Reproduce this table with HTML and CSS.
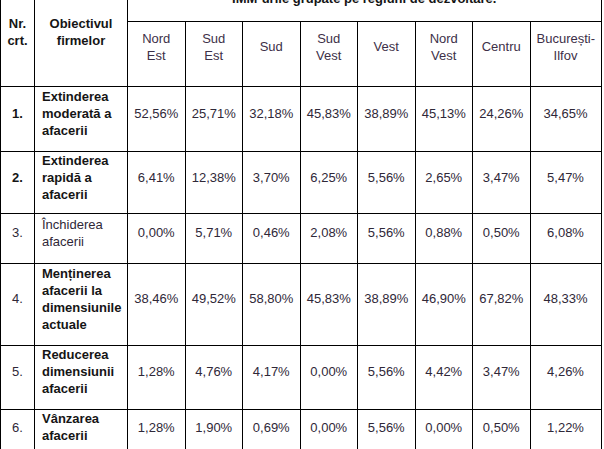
FILE: index.html
```html
<!DOCTYPE html>
<html lang="ro">
<head>
<meta charset="utf-8">
<title>Obiectivul firmelor</title>
<link rel="stylesheet" href="styles.css">
</head>
<body>
<table class="grid">
  <colgroup>
    <col class="c-nr">
    <col class="c-obj">
    <col class="c-reg">
    <col class="c-reg">
    <col class="c-reg">
    <col class="c-reg">
    <col class="c-reg">
    <col class="c-reg">
    <col class="c-reg">
    <col class="c-buc">
  </colgroup>
  <tr class="r-title">
    <th class="hd" rowspan="2">Nr.<br>crt.</th>
    <th class="hd" rowspan="2">Obiectivul<br>firmelor</th>
    <th class="hd title" colspan="8">IMM-urile grupate pe regiuni de dezvoltare.</th>
  </tr>
  <tr class="regions">
    <td>Nord Est</td>
    <td>Sud Est</td>
    <td>Sud</td>
    <td>Sud Vest</td>
    <td>Vest</td>
    <td>Nord Vest</td>
    <td>Centru</td>
    <td>București-Ilfov</td>
  </tr>
  <tr class="r1">
    <td class="nr b">1.</td>
    <td class="lbl b">Extinderea moderată a afacerii</td>
    <td>52,56%</td><td>25,71%</td><td>32,18%</td><td>45,83%</td>
    <td>38,89%</td><td>45,13%</td><td>24,26%</td><td>34,65%</td>
  </tr>
  <tr class="r2">
    <td class="nr b">2.</td>
    <td class="lbl b">Extinderea rapidă a afacerii</td>
    <td>6,41%</td><td>12,38%</td><td>3,70%</td><td>6,25%</td>
    <td>5,56%</td><td>2,65%</td><td>3,47%</td><td>5,47%</td>
  </tr>
  <tr class="r3">
    <td class="nr">3.</td>
    <td class="lbl">Închiderea afacerii</td>
    <td>0,00%</td><td>5,71%</td><td>0,46%</td><td>2,08%</td>
    <td>5,56%</td><td>0,88%</td><td>0,50%</td><td>6,08%</td>
  </tr>
  <tr class="r4">
    <td class="nr">4.</td>
    <td class="lbl b">Menținerea afacerii la dimensiunile actuale</td>
    <td>38,46%</td><td>49,52%</td><td>58,80%</td><td>45,83%</td>
    <td>38,89%</td><td>46,90%</td><td>67,82%</td><td>48,33%</td>
  </tr>
  <tr class="r5">
    <td class="nr">5.</td>
    <td class="lbl b">Reducerea dimensiunii afacerii</td>
    <td>1,28%</td><td>4,76%</td><td>4,17%</td><td>0,00%</td>
    <td>5,56%</td><td>4,42%</td><td>3,47%</td><td>4,26%</td>
  </tr>
  <tr class="r6">
    <td class="nr">6.</td>
    <td class="lbl b">Vânzarea afacerii</td>
    <td>1,28%</td><td>1,90%</td><td>0,69%</td><td>0,00%</td>
    <td>5,56%</td><td>0,00%</td><td>0,50%</td><td>1,22%</td>
  </tr>
</table>
</body>
</html>
```

FILE: styles.css
```css
html, body {
  margin: 0;
  padding: 0;
  background: #ffffff;
}
body {
  font-family: "Liberation Sans", Arial, sans-serif;
  font-size: 13px;
  line-height: 17px;
  color: #2f2838;
  overflow: hidden;
}
.grid {
  border-collapse: collapse;
  table-layout: fixed;
  width: 601px;
  margin-top: -11px;
}
.c-nr { width: 34px; }
.c-obj { width: 93px; }
.c-reg { width: 57.5px; }
.c-buc { width: 71px; }
.grid th,
.grid td {
  border: 1px solid #000000;
  padding: 0 6px 12px 6px;
  text-align: center;
  vertical-align: middle;
  font-weight: normal;
}
.grid .hd {
  font-weight: bold;
  color: #151515;
}
.grid .title {
  padding-bottom: 14px;
}
.grid .b {
  font-weight: bold;
  color: #151515;
}
.grid .nr {
  padding-left: 2px;
  padding-right: 2px;
}
.grid .lbl {
  text-align: left;
  padding-left: 7px;
  padding-right: 4px;
}
.regions td {
  color: #3d3048;
  height: 49px;
  padding-bottom: 15px;
}
.r1 td { height: 52px; }
.r2 td { height: 51px; padding-bottom: 10px; }
.r3 td { height: 37px; }
.r4 td { height: 69px; }
.r5 td { height: 51px; }
.r6 td { height: 34px; }
```
